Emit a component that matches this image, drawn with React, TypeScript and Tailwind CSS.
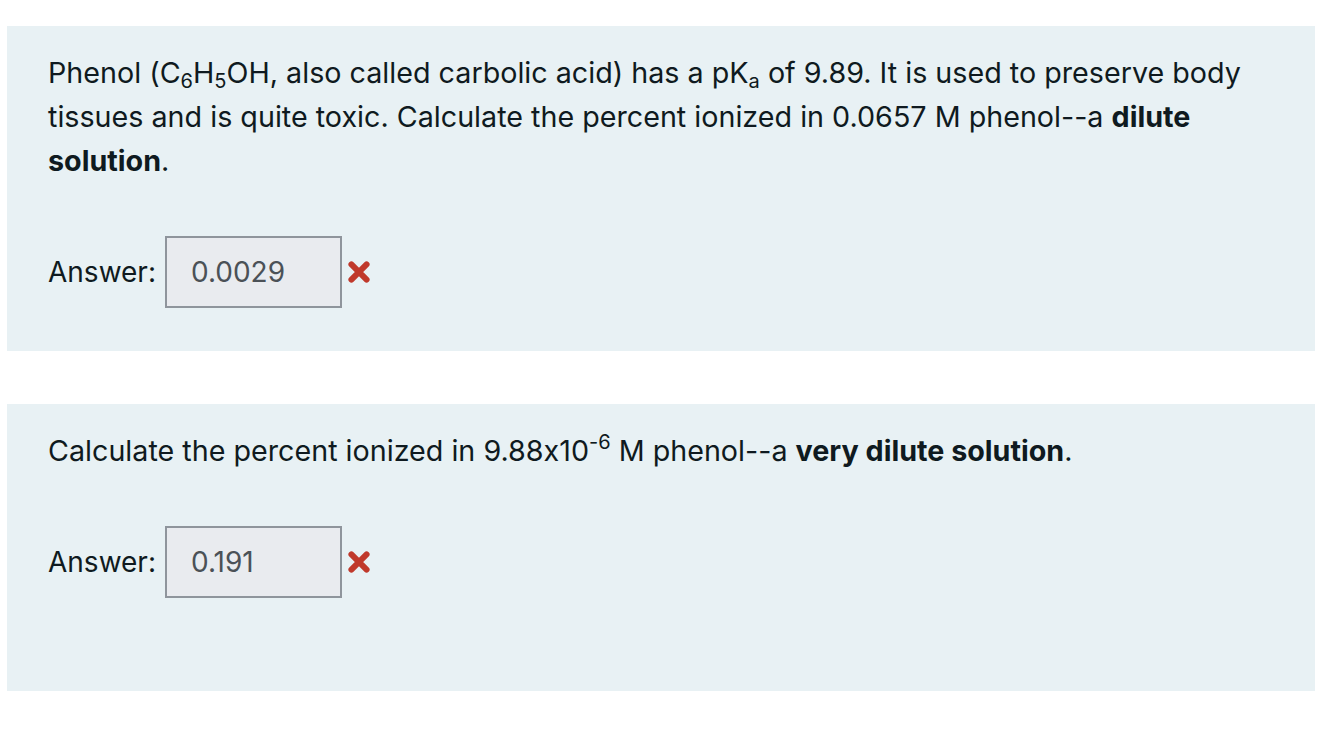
function Sub({ children }: { children: string }) {
  return <span className="relative top-[5px] text-[20px] leading-none">{children}</span>
}

function AnswerRow({ value }: { value: string }) {
  return (
    <div className="flex items-center text-[28px]">
      <span className="mr-[9px]">Answer:</span>
      <div className="w-[177px] h-[72px] border-2 border-[#8f959c] bg-[#e9ebef] flex items-center pl-[24px] text-[#4b5157]">
        {value}
      </div>
      <svg viewBox="0 0 24 22" className="ml-[4px] w-[26px] h-[24px]">
        <path d="M5 4 L19 18 M19 4 L5 18" stroke="#c0392b" strokeWidth="5.5" strokeLinecap="round" />
      </svg>
    </div>
  )
}

export default function App() {
  return (
    <div className="min-h-screen bg-white pt-[26px] pl-[7px] pr-[25px] text-[28.7px] leading-[44px] text-[#0f1a20] font-['Inter',sans-serif] [font-feature-settings:'calt'_0]">
      <div className="bg-[#e8f1f4] pl-[41px] pr-[40px] pt-[25px] pb-[43px]">
        <p>
          Phenol (C<Sub>6</Sub>H<Sub>5</Sub>OH, also called carbolic acid) has a pK<Sub>a</Sub> of 9.89. It is used to
          preserve body tissues and is quite toxic. Calculate the percent ionized in 0.0657 M phenol--a{' '}
          <strong className="font-bold">dilute solution</strong>.
        </p>
        <div className="mt-[53px]">
          <AnswerRow value="0.0029" />
        </div>
      </div>
      <div className="mt-[53px] bg-[#e8f1f4] pl-[41px] pr-[40px] pt-[25px] pb-[93px]">
        <p>
          Calculate the percent ionized in 9.88x10
          <span className="relative top-[-12px] text-[20px] leading-none">-6</span> M phenol--a{' '}
          <strong className="font-bold">very dilute solution</strong>.
        </p>
        <div className="mt-[53px]">
          <AnswerRow value="0.191" />
        </div>
      </div>
    </div>
  )
}
